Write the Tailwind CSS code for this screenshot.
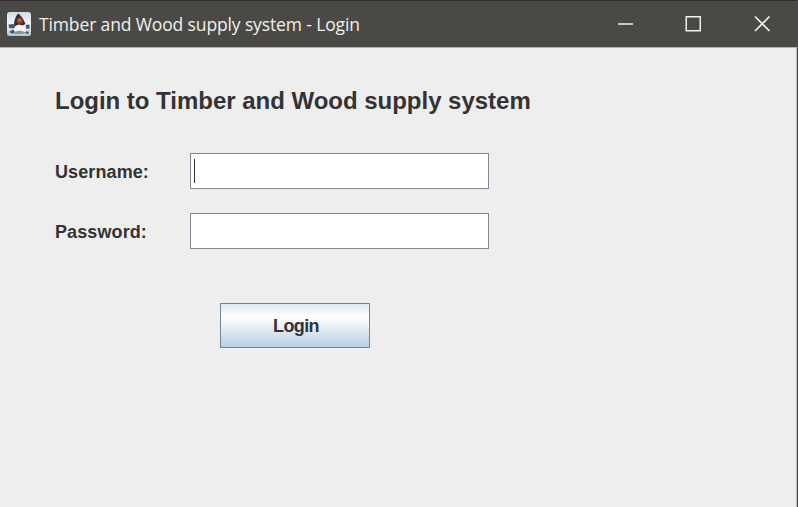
<!DOCTYPE html>
<html lang="en">
<head>
<meta charset="utf-8">
<title>Timber and Wood supply system - Login</title>
<script src="https://cdn.jsdelivr.net/npm/@tailwindcss/browser@4"></script>
</head>
<body class="w-[798px] h-[507px] overflow-hidden bg-[#eeeeee]">
<div class="flex flex-col w-[798px] h-[507px] border-r border-[#4a4946] font-['Liberation_Sans',Arial,sans-serif] text-[#333333]">
  <header class="flex items-center h-12 shrink-0 bg-[#4b4946] border-t border-t-[#2e2d2c] border-b border-b-[#b5b4b3] pl-[7px]">
    <svg class="w-6 h-6 shrink-0" viewBox="0 0 24 24">
      <defs><linearGradient id="g" x1="0" y1="0" x2="0" y2="1"><stop offset="0" stop-color="#cddde5"/><stop offset=".5" stop-color="#f4f7f8"/><stop offset="1" stop-color="#b4c3cc"/></linearGradient></defs>
      <rect width="24" height="24" rx="2.500" fill="url(#g)"/>
      <path d="M11 1.500c2 1 5 4 7.500 10.500l-3 1.500-4-1-4 2c-1-4 0-8 3.500-13z" fill="#34302f"/>
      <path d="M1.500 12.500l5-.5 2 2-1.500 2.500-5-.5zM18.500 13l4-.5v4l-3 .5zM2 20l4-2.500 2 2-2 2.500zM19 19l3 1-1 2-3-1z" fill="#3f5e73"/>
      <path d="M9 14l5-1 4 3 1 4-5-1-6 1-1-3z" fill="#f4f5f6"/>
      <path d="M7 20l6-1.500 6 2-4 1.500H8z" fill="#8496a1"/>
      <circle cx="13" cy="8.700" r="3.300" fill="#98382e"/>
      <circle cx="12.600" cy="8.200" r="1.300" fill="#d8705d"/>
    </svg>
    <h1 class="ml-2 w-[536px] whitespace-nowrap font-['Open_Sans','Noto_Sans',sans-serif] text-[17.5px] leading-6 text-[#f0f0ef] tracking-[-0.13px]">Timber and Wood supply system - Login</h1>
    <div class="flex ml-[17px]">
      <svg class="w-[68px] h-6" viewBox="0 0 68 24" fill="none" stroke="#f1f1f1" stroke-width="1.500"><path d="M26 12h15"/></svg>
      <svg class="w-[68px] h-6" viewBox="0 0 68 24" fill="none" stroke="#f1f1f1" stroke-width="1.500"><path d="M26.250 4.750h14v14h-14z"/></svg>
      <svg class="w-[68px] h-6" viewBox="0 0 68 24" fill="none" stroke="#f1f1f1" stroke-width="1.600"><path d="M27 4.500l14.500 14.500M41.500 4.500L27 19"/></svg>
    </div>
  </header>
  <main class="flex flex-col items-start pl-[55px] pt-[38px] border-r border-[#bdbdbd] grow">
    <h2 class="h-[30px] whitespace-nowrap text-[24px] leading-[30px] font-bold tracking-[-0.02px]">Login to Timber and Wood supply system</h2>
    <form class="flex flex-col items-start mt-[37px]">
      <div class="flex items-center h-9">
        <label class="w-[135px] pt-[2px] text-[18px] font-bold tracking-[0.1px]">Username:</label>
        <div class="flex items-center w-[299px] h-9 bg-white border border-[#7f8893] pl-[3px]"><div class="w-px h-6 bg-[#333]"></div></div>
      </div>
      <div class="flex items-center h-9 mt-6">
        <label class="w-[135px] pt-[2px] text-[18px] font-bold tracking-[0.1px]">Password:</label>
        <div class="w-[299px] h-9 bg-white border border-[#7f8893]"></div>
      </div>
      <button type="button" class="ml-[165px] mt-[54px] w-[150px] h-[45px] pt-[2px] pl-[2px] border border-[#75828f] bg-linear-to-b from-[#dfe9f3] via-white via-30% to-[#b8cfe5] text-[18px] font-bold tracking-[-0.6px]">Login</button>
    </form>
  </main>
</div>
</body>
</html>
